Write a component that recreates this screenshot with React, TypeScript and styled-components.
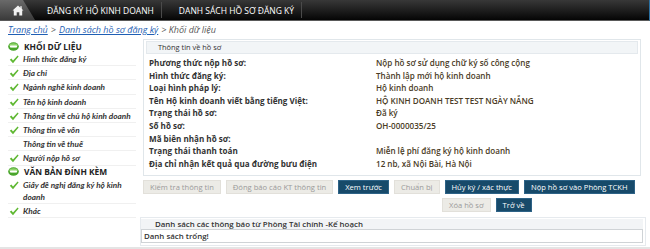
import React from 'react';
import styled, { createGlobalStyle } from 'styled-components';

const GlobalStyle = createGlobalStyle`
  html, body {
    margin: 0;
    padding: 0;
    background: #ffffff;
    font-family: "Open Sans", "Liberation Sans", sans-serif;
  }
`;

const Page = styled.div`
  width: 650px;
  height: 249px;
  overflow: hidden;
  display: flex;
  flex-direction: column;
  border-bottom: 2px solid #e4e4e4;
  box-sizing: border-box;
`;

const TopBar = styled.div`
  height: 20px;
  flex-shrink: 0;
  display: flex;
  align-items: stretch;
  background: linear-gradient(#383838, #050505);
  border-bottom: 1px solid #5a5a5a;
  border-right: 1px solid #2a6fa0;
`;

const HomeTab = styled.div`
  width: 36px;
  display: flex;
  align-items: center;
  padding-left: 12px;
  box-sizing: border-box;
  background: linear-gradient(#6a6a6a, #3a3a3a);
  clip-path: polygon(0 0, 23px 0, 35px 100%, 0 100%);
`;

const MenuItem = styled.div<{ first?: boolean }>`
  display: flex;
  align-items: center;
  padding: 0 7px 0 ${(p) => (p.first ? '11px' : '17px')};
  color: #ffffff;
  font-size: 8.5px;
  border-right: 1px solid #4a4a4a;
  margin: 2px 0;
  white-space: nowrap;
`;

const Breadcrumb = styled.div`
  height: 16px;
  flex-shrink: 0;
  display: flex;
  align-items: center;
  padding-left: 8px;
  font-size: 9px;
  font-style: italic;
  color: #555;
  gap: 3px;
`;

const Crumb = styled.a`
  color: #1f5fb4;
  text-decoration: underline;
`;

const Body = styled.div`
  display: flex;
  flex: 1;
  padding-top: 2px;
`;

const Sidebar = styled.div`
  width: 140px;
  flex-shrink: 0;
  padding: 1px 0 0 8px;
  box-sizing: border-box;
`;

const SectionTitle = styled.div`
  display: flex;
  align-items: center;
  gap: 5px;
  height: 12px;
  font-size: 8.4px;
  font-weight: 700;
  color: #222;
`;

const NavItem = styled.div<{ wrap?: boolean }>`
  display: flex;
  align-items: flex-start;
  gap: 4px;
  padding: 1px 0 0 0;
  margin-right: 4px;
  border-bottom: 1px solid #f0f0f0;
  font-family: Lato, "Open Sans", sans-serif;
  font-size: 8.2px;
  font-style: italic;
  font-weight: 700;
  color: #333;
  line-height: 12.2px;
  white-space: ${(p) => (p.wrap ? 'normal' : 'nowrap')};
`;

const NavText = styled.span<{ wrap?: boolean }>`
  max-width: ${(p) => (p.wrap ? '110px' : 'none')};
`;

const CheckBox = styled.span`
  width: 11px;
  flex-shrink: 0;
  display: flex;
  justify-content: center;
  padding-top: 2px;
`;

const Main = styled.div`
  flex: 1;
  min-width: 0;
  padding: 0 9px 0 3px;
  display: flex;
  flex-direction: column;
`;

const InfoPanel = styled.div`
  border: 1px solid #e0e6ea;
  padding: 1px 2px 5px;
`;

const PanelHeader = styled.div`
  height: 11px;
  background: #f2f5f7;
  border: 1px solid #e4e9ed;
  font-size: 7.4px;
  color: #333;
  padding-left: 11px;
  line-height: 11px;
`;

const Fields = styled.div`
  display: grid;
  grid-template-columns: 227px 1fr;
  padding: 3px 0 0 3px;
`;

const Label = styled.div`
  font-size: 8.1px;
  font-weight: 700;
  color: #333;
  height: 12.6px;
  line-height: 12.6px;
  white-space: nowrap;
`;

const Value = styled.div`
  font-size: 8.1px;
  font-weight: 600;
  color: #4a3b25;
  height: 12.6px;
  line-height: 12.6px;
  white-space: nowrap;
`;

const ButtonRow = styled.div<{ offset?: number }>`
  display: flex;
  gap: 5px;
  padding-left: ${(p) => p.offset ?? 0}px;
  margin-top: 4px;
`;

const Button = styled.div<{ primary?: boolean }>`
  height: 12px;
  line-height: 12px;
  padding: 0 6px;
  font-size: 7.6px;
  white-space: nowrap;
  background: ${(p) => (p.primary ? '#174a6a' : '#ecebe6')};
  color: ${(p) => (p.primary ? '#ffffff' : '#9a9a9a')};
  border: 1px solid ${(p) => (p.primary ? '#2d6286' : '#e2e0da')};
`;

const NoticePanel = styled.div`
  margin: 5px -5px 0 -3px;
  border: 1px solid #e6eaee;
  padding: 1px 2px 2px 0;
`;

const NoticeHeader = styled.div`
  height: 10px;
  background: #f2f4f6;
  font-size: 7.9px;
  font-weight: 600;
  color: #333;
  padding-left: 14px;
  line-height: 10px;
`;

const NoticeBody = styled.div`
  border: 1px solid #cfd3d6;
  height: 12px;
  line-height: 12px;
  font-size: 7.9px;
  font-weight: 600;
  color: #333;
  padding-left: 2px;
`;

const HomeIcon = () => (
  <svg width="12" height="11" viewBox="0 0 12 11">
    <path d="M6 0.5 L11.5 5.5 L10.2 5.5 L10.2 10.5 L7.3 10.5 L7.3 7.3 L4.7 7.3 L4.7 10.5 L1.8 10.5 L1.8 5.5 L0.5 5.5 Z" fill="#f2f2f2" />
    <rect x="8.3" y="1.2" width="1.4" height="3" fill="#f2f2f2" />
  </svg>
);

const Check = () => (
  <svg width="10" height="9" viewBox="0 0 10 9">
    <path d="M0.8 4.8 L2.4 3.6 L4 5.4 L8.6 0.6 L9.6 1.6 L4 8.2 Z" fill="#5fb832" />
  </svg>
);

const SectionIcon = () => (
  <svg width="11" height="9" viewBox="0 0 11 9">
    <ellipse cx="5.5" cy="4.5" rx="5.3" ry="4.3" fill="#49a52c" />
    <ellipse cx="5.5" cy="3.4" rx="4.2" ry="2.2" fill="#8fd46a" />
    <rect x="2" y="3.6" width="7" height="1.8" rx="0.6" fill="#ffffff" />
  </svg>
);

const fields: [string, string][] = [
  ['Phương thức nộp hồ sơ:', 'Nộp hồ sơ sử dụng chữ ký số công cộng'],
  ['Hình thức đăng ký:', 'Thành lập mới hộ kinh doanh'],
  ['Loại hình pháp lý:', 'Hộ kinh doanh'],
  ['Tên Hộ kinh doanh viết bằng tiếng Việt:', 'HỘ KINH DOANH TEST TEST NGÀY NẮNG'],
  ['Trạng thái hồ sơ:', 'Đã ký'],
  ['Số hồ sơ:', 'OH-0000035/25'],
  ['Mã biên nhận hồ sơ:', ''],
  ['Trạng thái thanh toán', 'Miễn lệ phí đăng ký hộ kinh doanh'],
  ['Địa chỉ nhận kết quả qua đường bưu điện', '12 nb, xã Nội Bài, Hà Nội'],
];

const dataItems: { text: string; checked: boolean }[] = [
  { text: 'Hình thức đăng ký', checked: true },
  { text: 'Địa chỉ', checked: true },
  { text: 'Ngành nghề kinh doanh', checked: true },
  { text: 'Tên hộ kinh doanh', checked: true },
  { text: 'Thông tin về chủ hộ kinh doanh', checked: true },
  { text: 'Thông tin về vốn', checked: true },
  { text: 'Thông tin về thuế', checked: false },
  { text: 'Người nộp hồ sơ', checked: true },
];

const App: React.FC = () => (
  <Page>
    <GlobalStyle />
    <TopBar>
      <HomeTab>
        <HomeIcon />
      </HomeTab>
      <MenuItem first>ĐĂNG KÝ HỘ KINH DOANH</MenuItem>
      <MenuItem>DANH SÁCH HỒ SƠ ĐĂNG KÝ</MenuItem>
    </TopBar>

    <Breadcrumb>
      <Crumb>Trang chủ</Crumb>
      <span>&gt;</span>
      <Crumb>Danh sách hồ sơ đăng ký</Crumb>
      <span>&gt; Khối dữ liệu</span>
    </Breadcrumb>

    <Body>
      <Sidebar>
        <SectionTitle>
          <SectionIcon />
          KHỐI DỮ LIỆU
        </SectionTitle>
        {dataItems.map((item) => (
          <NavItem key={item.text}>
            <CheckBox>{item.checked && <Check />}</CheckBox>
            <NavText>{item.text}</NavText>
          </NavItem>
        ))}
        <SectionTitle>
          <SectionIcon />
          VĂN BẢN ĐÍNH KÈM
        </SectionTitle>
        <NavItem wrap>
          <CheckBox>
            <Check />
          </CheckBox>
          <NavText wrap>Giấy đề nghị đăng ký hộ kinh doanh</NavText>
        </NavItem>
        <NavItem>
          <CheckBox>
            <Check />
          </CheckBox>
          <NavText>Khác</NavText>
        </NavItem>
      </Sidebar>

      <Main>
        <InfoPanel>
          <PanelHeader>Thông tin về hồ sơ</PanelHeader>
          <Fields>
            {fields.map(([label, value]) => (
              <React.Fragment key={label}>
                <Label>{label}</Label>
                <Value>{value}</Value>
              </React.Fragment>
            ))}
          </Fields>
        </InfoPanel>

        <ButtonRow>
          <Button>Kiểm tra thông tin</Button>
          <Button>Đóng báo cáo KT thông tin</Button>
          <Button primary>Xem trước</Button>
          <Button>Chuẩn bị</Button>
          <Button primary>Hủy ký / xác thực</Button>
          <Button primary>Nộp hồ sơ vào Phòng TCKH</Button>
        </ButtonRow>
        <ButtonRow offset={299}>
          <Button>Xóa hồ sơ</Button>
          <Button primary>Trở về</Button>
        </ButtonRow>

        <NoticePanel>
          <NoticeHeader>Danh sách các thông báo từ Phòng Tài chính -Kế hoạch</NoticeHeader>
          <NoticeBody>Danh sách trống!</NoticeBody>
        </NoticePanel>
      </Main>
    </Body>
  </Page>
);

export default App;
